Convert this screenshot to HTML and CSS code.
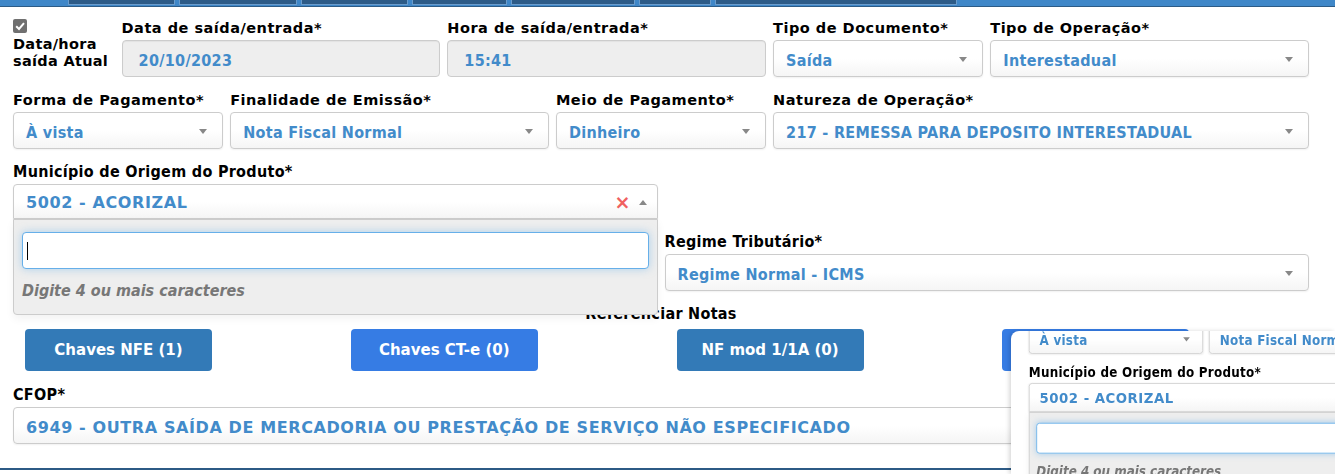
FILE: index.html
```html
<!DOCTYPE html>
<html lang="pt-BR">
<head>
    <meta charset="UTF-8">
    <meta name="viewport" content="width=device-width, initial-scale=1.0">
    <title>Emissão de Nota Fiscal</title>
    <link rel="stylesheet" href="styles.css">
</head>
<body>

<div class="topbar">
    <span class="tab t1"></span>
    <span class="tab t2"></span>
    <span class="tab t3"></span>
    <span class="tab t4"></span>
    <span class="tab t5"></span>
    <span class="tab t6"></span>
    <span class="tab t7"></span>
</div>

<div class="form">
    <div class="row">
        <div class="field col-1 now">
            <span class="check"><svg width="14" height="14" viewBox="0 0 14 14"><path d="M3.2 7.3 L6 10 L11 4.2" fill="none" stroke="#fff" stroke-width="2"/></svg></span>
            <span class="now-text">Data/hora saída Atual</span>
        </div>
        <div class="field col-3">
            <label class="wide">Data de saída/entrada*</label>
            <div class="inp ro">20/10/2023</div>
        </div>
        <div class="field col-3">
            <label class="wide">Hora de saída/entrada*</label>
            <div class="inp ro">15:41</div>
        </div>
        <div class="field col-2">
            <label class="wide">Tipo de Documento*</label>
            <div class="inp sel">Saída<b class="arrow"></b></div>
        </div>
        <div class="field col-3">
            <label class="wide">Tipo de Operação*</label>
            <div class="inp sel">Interestadual<b class="arrow"></b></div>
        </div>
    </div>

    <div class="row">
        <div class="field col-2">
            <label class="wide">Forma de Pagamento*</label>
            <div class="inp sel">À vista<b class="arrow"></b></div>
        </div>
        <div class="field col-3">
            <label class="wide">Finalidade de Emissão*</label>
            <div class="inp sel">Nota Fiscal Normal<b class="arrow"></b></div>
        </div>
        <div class="field col-2">
            <label class="wide">Meio de Pagamento*</label>
            <div class="inp sel">Dinheiro<b class="arrow"></b></div>
        </div>
        <div class="field col-5">
            <label class="wide">Natureza de Operação*</label>
            <div class="inp sel">217 - REMESSA PARA DEPOSITO INTERESTADUAL<b class="arrow"></b></div>
        </div>
    </div>

    <div class="row">
        <div class="field col-6 open-wrap">
            <label>Município de Origem do Produto*</label>
            <div class="inp sel s2 open">5002 - ACORIZAL<span class="clear">×</span><b class="arrow up"></b></div>
            <div class="drop">
                <div class="search"><span class="caret"></span></div>
                <p class="hint">Digite 4 ou mais caracteres</p>
            </div>
        </div>
    </div>

    <div class="row">
        <div class="field col-6 blank"></div>
        <div class="field col-6">
            <label>Regime Tributário*</label>
            <div class="inp sel">Regime Normal - ICMS<b class="arrow"></b></div>
        </div>
    </div>

    <h4 class="ref-title">Referenciar Notas</h4>
    <div class="row btn-row">
        <div class="col-3"><button class="btn">Chaves NFE (1)</button></div>
        <div class="col-3"><button class="btn bright">Chaves CT-e (0)</button></div>
        <div class="col-3"><button class="btn">NF mod 1/1A (0)</button></div>
        <div class="col-3"><button class="btn bright"></button></div>
    </div>

    <div class="row">
        <div class="field col-12">
            <label>CFOP*</label>
            <div class="inp sel s2">6949 - OUTRA SAÍDA DE MERCADORIA OU PRESTAÇÃO DE SERVIÇO NÃO ESPECIFICADO</div>
        </div>
    </div>
</div>

<div class="bottom-line"></div>

<!-- janela de pré-visualização flutuante -->
<div class="preview">
    <div class="form mini">
        <div class="row">
            <div class="field col-2">
                <div class="spacer"></div>
                <div class="inp sel">À vista<b class="arrow"></b></div>
            </div>
            <div class="field col-3">
                <div class="spacer"></div>
                <div class="inp sel">Nota Fiscal Normal<b class="arrow"></b></div>
            </div>
        </div>
        <div class="row">
            <div class="field col-6 open-wrap">
                <label>Município de Origem do Produto*</label>
                <div class="inp sel s2 open">5002 - ACORIZAL</div>
                <div class="drop">
                    <div class="search"></div>
                    <p class="hint">Digite 4 ou mais caracteres</p>
                </div>
            </div>
        </div>
    </div>
</div>

</body>
</html>
```

FILE: styles.css
```css
html, body {
    margin: 0;
    padding: 0;
    height: 100%;
    overflow: hidden;
}
body {
    position: relative;
    background-color: #fff;
    font-family: "DejaVu Sans", Verdana, sans-serif;
    color: #000;
}
.topbar {
    height: 6px;
    background-color: #3f87c8;
    border-bottom: 1px solid #2c5b86;
    display: flex;
    gap: 4px;
    padding-left: 68px;
}
.tab {
    height: 5px;
    background-color: #2d5b87;
    border: 1px solid #6b9ccb;
    border-top: none;
    box-sizing: border-box;
}
.t1 { width: 107px; }
.t2 { width: 118px; }
.t3 { width: 107px; }
.t4 { width: 95px; }
.t5 { width: 124px; }
.t6 { width: 72px; }
.t7 { width: 242px; }

.form {
    padding: 11px 26px 0 13px;
}
.row {
    display: grid;
    grid-template-columns: repeat(12, 1fr);
    column-gap: 7px;
}
.col-1 { grid-column: span 1; }
.col-2 { grid-column: span 2; }
.col-3 { grid-column: span 3; }
.col-5 { grid-column: span 5; }
.col-6 { grid-column: span 6; }
.col-12 { grid-column: span 12; }

.field {
    margin-bottom: 13px;
    position: relative;
}
.blank {
    height: 59px;
}
.spacer {
    height: 22px;
}

/* checkbox da primeira coluna */
.now {
    display: flex;
    flex-direction: column;
    align-items: flex-start;
}
.check {
    display: block;
    width: 14px;
    height: 14px;
    margin-top: 1px;
    border-radius: 2px;
    background-color: #707070;
}
.check svg {
    display: block;
}
.now-text {
    margin-top: 3px;
    font-weight: bold;
    font-size: 14.5px;
    line-height: 17px;
    letter-spacing: 0.3px;
}

label {
    display: block;
    height: 20px;
    line-height: 20px;
    margin-bottom: 2px;
    font-family: "DejaVu Sans Condensed", "DejaVu Sans", sans-serif;
    font-stretch: condensed;
    font-weight: bold;
    font-size: 16px;
    letter-spacing: 0.3px;
    white-space: nowrap;
}
label.wide {
    font-family: "DejaVu Sans", sans-serif;
    font-stretch: normal;
    font-size: 14.5px;
    letter-spacing: 0.5px;
}
.inp {
    position: relative;
    height: 37px;
    line-height: 39px;
    box-sizing: border-box;
    border: 1px solid #ccc;
    border-radius: 4px;
    padding: 0 12px;
    color: #428bca;
    font-family: "DejaVu Sans Condensed", "DejaVu Sans", sans-serif;
    font-stretch: condensed;
    font-weight: bold;
    font-size: 16px;
    letter-spacing: 0.3px;
    white-space: nowrap;
    overflow: hidden;
}
.inp.ro {
    background-color: #eee;
    padding-left: 16px;
    box-shadow: inset 0 1px 1px rgba(0,0,0,0.05);
}
.inp.sel {
    background: linear-gradient(#fff 0%, #fff 50%, #f5f5f5 100%);
    box-shadow: 0 1px 2px rgba(0,0,0,0.06);
}
.inp.s2 {
    font-family: "DejaVu Sans", sans-serif;
    font-stretch: normal;
    font-size: 16px;
    letter-spacing: 0.6px;
}
.arrow {
    position: absolute;
    right: 15px;
    top: 16px;
    width: 0;
    height: 0;
    border-left: 4px solid transparent;
    border-right: 4px solid transparent;
    border-top: 5px solid #888;
}
.arrow.up {
    border-top: none;
    border-bottom: 5px solid #888;
    right: 10px;
    top: 15px;
}
.clear {
    position: absolute;
    right: 26px;
    top: 0;
    color: #f06060;
    font-weight: bold;
    font-size: 19px;
    letter-spacing: 0;
}
.inp.open {
    height: 35px;
    border-radius: 4px 4px 0 0;
    line-height: 35px;
}

.drop {
    position: absolute;
    left: 0;
    right: 0;
    top: 57px;
    z-index: 5;
    height: 96px;
    box-sizing: border-box;
    background-color: #eee;
    border: 1px solid #ccc;
    border-radius: 0 0 4px 4px;
    padding: 12px 8px 0 8px;
    box-shadow: 0 4px 8px rgba(0,0,0,0.05);
}
.search {
    position: relative;
    height: 37px;
    box-sizing: border-box;
    background-color: #fff;
    border: 1px solid #66afe9;
    border-radius: 4px;
    box-shadow: 0 0 8px rgba(102,175,233,0.5);
}
.caret {
    position: absolute;
    left: 4px;
    top: 9px;
    width: 1px;
    height: 18px;
    background-color: #000;
}
.hint {
    margin: 12px 0 0 0;
    color: #777;
    font-family: "DejaVu Sans Condensed", "DejaVu Sans", sans-serif;
    font-stretch: condensed;
    font-style: italic;
    font-weight: bold;
    font-size: 16px;
}

.ref-title {
    margin: 0;
    text-align: center;
    height: 20px;
    line-height: 20px;
    font-family: "DejaVu Sans Condensed", "DejaVu Sans", sans-serif;
    font-stretch: condensed;
    font-size: 16px;
    letter-spacing: 0.3px;
    font-weight: bold;
}
.btn-row {
    margin-top: 5px;
    margin-bottom: 14px;
}
.btn {
    display: block;
    margin-left: 12px;
    width: 187px;
    height: 42px;
    border: none;
    border-radius: 4px;
    background-color: #337ab7;
    color: #fff;
    font-family: "DejaVu Sans", sans-serif;
    font-weight: bold;
    font-size: 15px;
    cursor: pointer;
}
.btn.bright {
    background-color: #367ce4;
}

.bottom-line {
    position: absolute;
    left: 0;
    right: 0;
    top: 468px;
    height: 2px;
    background-color: #2c5a85;
}

.preview {
    position: absolute;
    left: 1011px;
    top: 331px;
    right: 0;
    bottom: 0;
    z-index: 10;
    overflow: hidden;
    background-color: #fff;
    border-top-left-radius: 8px;
    box-shadow: -2px 0 4px rgba(0,0,0,0.15);
}
.mini {
    position: absolute;
    left: 7px;
    top: -26px;
    width: 1296px;
    transform: scale(0.83);
    transform-origin: 0 0;
    padding-top: 0;
}
```
